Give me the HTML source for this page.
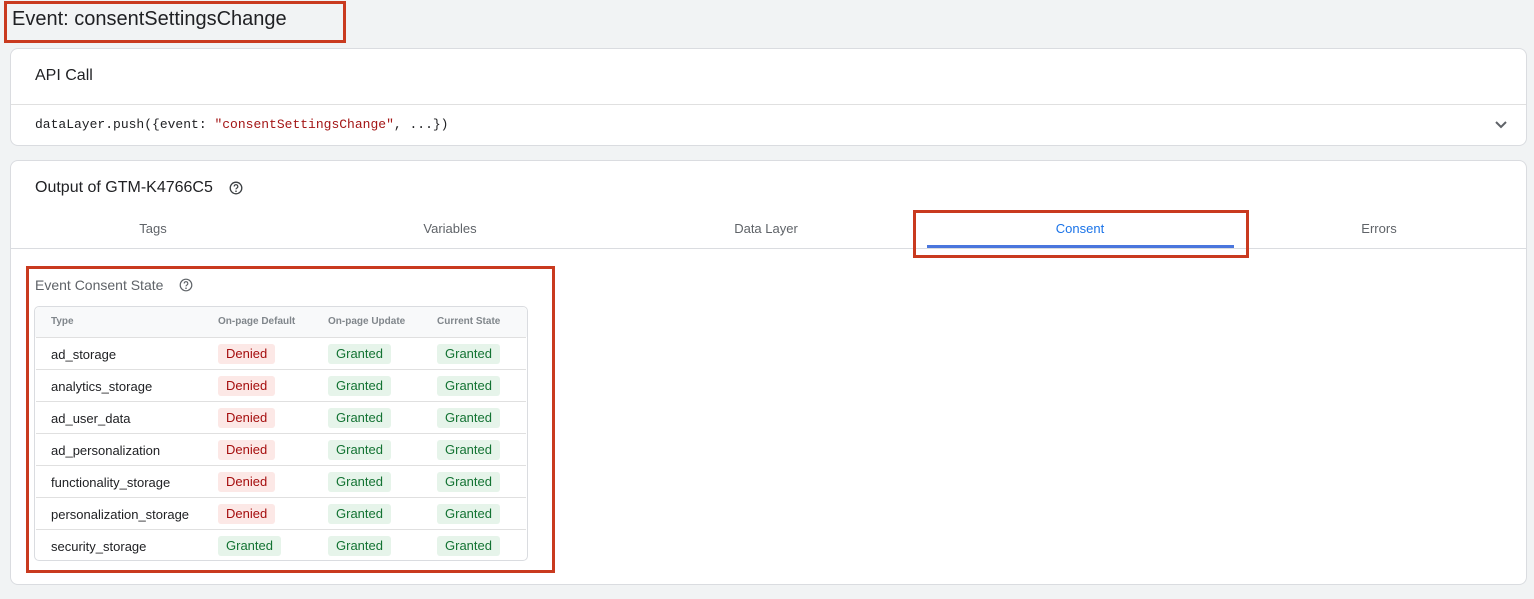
<!DOCTYPE html>
<html><head><meta charset="utf-8"><style>
*{box-sizing:border-box;margin:0;padding:0}
body{width:1534px;height:599px;background:#f1f3f4;font-family:"Liberation Sans",sans-serif;position:relative;overflow:hidden;color:#202124}
.a{position:absolute}
.red{position:absolute;border:3px solid #c93a1f}
.card{position:absolute;background:#fff;border:1px solid #dadce0;border-radius:8px}
.tab{position:absolute;top:221px;font-size:13px;color:#5f6368;transform:translateX(-50%)}
.row{position:absolute;left:36px;width:490px;height:32px;border-top:1px solid #e0e0e0;font-size:13px}
.row span{position:absolute;top:9px}
.b{position:absolute;top:6px;height:20px;line-height:20px;padding:0 8px;border-radius:3px;font-size:13px}
.d{background:#fce8e6;color:#a50e0e}
.g{background:#e6f4ea;color:#137333}
</style></head><body>
<div class="a" style="left:12px;top:8px;font-size:20px;color:#202124">Event: consentSettingsChange</div>
<div class="red" style="left:4px;top:1px;width:342px;height:42px"></div>

<div class="card" style="left:10px;top:48px;width:1517px;height:98px"></div>
<div class="a" style="left:35px;top:67px;font-size:16px">API Call</div>
<div class="a" style="left:11px;top:104px;width:1515px;height:1px;background:#e0e0e0"></div>
<div class="a" style="left:35px;top:117px;font-family:'Liberation Mono',monospace;font-size:13px">dataLayer.push({event: <span style="color:#a31515">"consentSettingsChange"</span>, ...})</div>
<svg class="a" style="left:1494px;top:120px" width="14" height="10" viewBox="0 0 14 10"><path d="M2 2l5 5 5-5" fill="none" stroke="#5f6368" stroke-width="2"/></svg>

<div class="card" style="left:10px;top:160px;width:1517px;height:425px"></div>
<div class="a" style="left:35px;top:179px;font-size:16px">Output of GTM-K4766C5</div>
<svg class="a" style="left:229px;top:181px" width="14" height="14" viewBox="0 0 14 14"><circle cx="7" cy="7" r="5.8" fill="none" stroke="#3c4043" stroke-width="1.3"/><path d="M5.2 5.5a1.8 1.8 0 1 1 2.6 1.6c-.6.3-.8.6-.8 1.3" fill="none" stroke="#3c4043" stroke-width="1.2"/><circle cx="7" cy="10.2" r=".8" fill="#3c4043"/></svg>
<div class="tab" style="left:153px">Tags</div>
<div class="tab" style="left:450px">Variables</div>
<div class="tab" style="left:766px">Data Layer</div>
<div class="tab" style="left:1080px;color:#1a73e8">Consent</div>
<div class="tab" style="left:1379px">Errors</div>
<div class="a" style="left:11px;top:248px;width:1515px;height:1px;background:#dadce0"></div>
<div class="a" style="left:927px;top:245px;width:307px;height:3px;background:#4a76dd"></div>
<div class="red" style="left:913px;top:210px;width:336px;height:48px"></div>

<div class="a" style="left:35px;top:277px;font-size:14px;color:#5f6368">Event Consent State</div>
<svg class="a" style="left:179px;top:278px" width="14" height="14" viewBox="0 0 14 14"><circle cx="7" cy="7" r="5.8" fill="none" stroke="#5f6368" stroke-width="1.2"/><path d="M5.2 5.5a1.8 1.8 0 1 1 2.6 1.6c-.6.3-.8.6-.8 1.3" fill="none" stroke="#5f6368" stroke-width="1.1"/><circle cx="7" cy="10.2" r=".8" fill="#5f6368"/></svg>
<div class="a" style="left:34px;top:306px;width:494px;height:255px;border:1px solid #dadce0;border-radius:5px;background:#fff"></div>
<div class="a" style="left:35px;top:307px;width:492px;height:30px;background:#f8f9fa;border-radius:5px 5px 0 0"></div>
<div class="a" style="top:316px;left:51px;font-size:10px;font-weight:bold;color:#80868b">Type</div>
<div class="a" style="top:316px;left:218px;font-size:10px;font-weight:bold;color:#80868b">On-page Default</div>
<div class="a" style="top:316px;left:328px;font-size:10px;font-weight:bold;color:#80868b">On-page Update</div>
<div class="a" style="top:316px;left:437px;font-size:10px;font-weight:bold;color:#80868b">Current State</div>

<div class="row" style="top:337px"><span style="left:15px">ad_storage</span><div class="b d" style="left:182px">Denied</div><div class="b g" style="left:292px">Granted</div><div class="b g" style="left:401px">Granted</div></div>
<div class="row" style="top:369px"><span style="left:15px">analytics_storage</span><div class="b d" style="left:182px">Denied</div><div class="b g" style="left:292px">Granted</div><div class="b g" style="left:401px">Granted</div></div>
<div class="row" style="top:401px"><span style="left:15px">ad_user_data</span><div class="b d" style="left:182px">Denied</div><div class="b g" style="left:292px">Granted</div><div class="b g" style="left:401px">Granted</div></div>
<div class="row" style="top:433px"><span style="left:15px">ad_personalization</span><div class="b d" style="left:182px">Denied</div><div class="b g" style="left:292px">Granted</div><div class="b g" style="left:401px">Granted</div></div>
<div class="row" style="top:465px"><span style="left:15px">functionality_storage</span><div class="b d" style="left:182px">Denied</div><div class="b g" style="left:292px">Granted</div><div class="b g" style="left:401px">Granted</div></div>
<div class="row" style="top:497px"><span style="left:15px">personalization_storage</span><div class="b d" style="left:182px">Denied</div><div class="b g" style="left:292px">Granted</div><div class="b g" style="left:401px">Granted</div></div>
<div class="row" style="top:529px"><span style="left:15px">security_storage</span><div class="b g" style="left:182px">Granted</div><div class="b g" style="left:292px">Granted</div><div class="b g" style="left:401px">Granted</div></div>

<div class="red" style="left:26px;top:266px;width:529px;height:307px"></div>
</body></html>
